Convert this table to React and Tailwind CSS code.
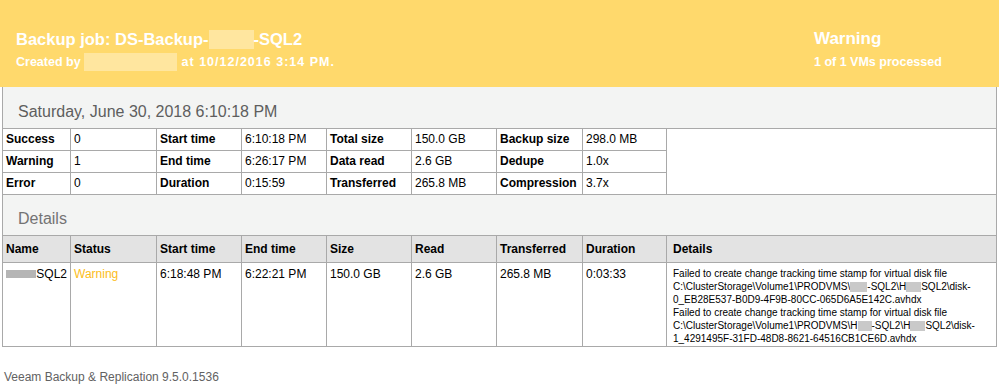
import React from "react";

const cell = "border border-[#a9a9a9] px-[3px] align-middle";
const label = `${cell} font-bold`;
const dataCell = `${cell} align-top pt-[2px]`;

const summary = [
  ["Success", "0", "Start time", "6:10:18 PM", "Total size", "150.0 GB", "Backup size", "298.0 MB"],
  ["Warning", "1", "End time", "6:26:17 PM", "Data read", "2.6 GB", "Dedupe", "1.0x"],
  ["Error", "0", "Duration", "0:15:59", "Transferred", "265.8 MB", "Compression", "3.7x"],
];

const headers = ["Name", "Status", "Start time", "End time", "Size", "Read", "Transferred", "Duration"];

function Blur({ w, h = "h-[10px]", color = "bg-[#c9c9c9]" }) {
  return <span className={`inline-block align-middle ${h} ${color}`} style={{ width: w }} />;
}

export default function App() {
  return (
    <div className="w-[999px] bg-white font-['Liberation_Sans',Arial,sans-serif] text-[12px] text-black">
      <div className="flex h-[87px] bg-[#ffd96c] text-white">
        <div className="flex-1 pl-4 pt-[30px]">
          <div className="flex h-[18px] items-center text-[16.5px] font-bold leading-[18px]">
            Backup job: DS-Backup-
            <span className="inline-block h-[19px] w-[45px] bg-[#ffe69f]" />
            -SQL2
          </div>
          <div className="mt-[7px] flex h-[14px] items-center text-[12.5px] font-bold">
            Created by&nbsp;
            <span className="inline-block h-[18px] w-[93px] bg-[#ffe69f]" />
            <span className="tracking-[1px]">&nbsp;at 10/12/2016 3:14 PM.</span>
          </div>
        </div>
        <div className="w-[185px] pt-[30px]">
          <div className="h-[18px] text-[17px] font-bold leading-[18px]">Warning</div>
          <div className="mt-[7px] h-[14px] text-[12.5px] font-bold leading-[14px]">1 of 1 VMs processed</div>
        </div>
      </div>

      <table className="ml-[2px] w-[995px] table-fixed border-collapse">
        <colgroup>
          <col className="w-[68px]" />
          <col className="w-[86px]" />
          <col className="w-[85px]" />
          <col className="w-[85px]" />
          <col className="w-[85px]" />
          <col className="w-[85px]" />
          <col className="w-[86px]" />
          <col className="w-[84px]" />
          <col />
        </colgroup>
        <tbody>
          <tr>
            <td colSpan={9} className="h-[41px] border-x border-b border-[#a9a9a9] bg-[#f3f4f3] pl-[15px] pt-[10px] text-[16px] text-[#5e5e5e]">
              Saturday, June 30, 2018 6:10:18 PM
            </td>
          </tr>
          {summary.map((row, i) => (
            <tr key={i} className="h-[22px]">
              {row.map((v, j) => (
                <td key={j} className={j % 2 === 0 ? label : cell}>
                  {v}
                </td>
              ))}
              {i === 0 && <td rowSpan={3} className="border border-[#a9a9a9]" />}
            </tr>
          ))}
          <tr>
            <td colSpan={9} className="h-[41px] border border-[#a9a9a9] bg-[#f3f4f3] pl-[15px] pt-[8px] text-[16px] text-[#737373]">
              Details
            </td>
          </tr>
          <tr className="h-[27px] bg-[#e3e3e3]">
            {headers.map((h) => (
              <td key={h} className={label}>
                {h}
              </td>
            ))}
            <td className={`${label} pl-[6px]`}>Details</td>
          </tr>
          <tr className="h-[84px]">
            <td className={dataCell}>
              <span className="flex items-center">
                <Blur w="31px" h="h-[8px]" color="bg-[#b5b5b5]" />
                SQL2
              </span>
            </td>
            <td className={`${dataCell} text-[#fcbd1b]`}>Warning</td>
            <td className={dataCell}>6:18:48 PM</td>
            <td className={dataCell}>6:22:21 PM</td>
            <td className={dataCell}>150.0 GB</td>
            <td className={dataCell}>2.6 GB</td>
            <td className={dataCell}>265.8 MB</td>
            <td className={dataCell}>0:03:33</td>
            <td className={`${cell} pl-[6px] align-top pt-[4px] text-[10px] leading-[13px]`}>
              Failed to create change tracking time stamp for virtual disk file
              <br />
              {"C:\\ClusterStorage\\Volume1\\PRODVMS\\"}
              <Blur w="17px" />
              {"-SQL2\\H"}
              <Blur w="15px" />
              {"SQL2\\disk-"}
              <br />
              0_EB28E537-B0D9-4F9B-80CC-065D6A5E142C.avhdx
              <br />
              Failed to create change tracking time stamp for virtual disk file
              <br />
              {"C:\\ClusterStorage\\Volume1\\PRODVMS\\H"}
              <Blur w="14px" />
              {"-SQL2\\H"}
              <Blur w="15px" />
              {"SQL2\\disk-"}
              <br />
              1_4291495F-31FD-48D8-8621-64516CB1CE6D.avhdx
            </td>
          </tr>
        </tbody>
      </table>

      <div className="mt-[21px] pl-[4px] text-[12px] text-[#626262]">Veeam Backup &amp; Replication 9.5.0.1536</div>
    </div>
  );
}
